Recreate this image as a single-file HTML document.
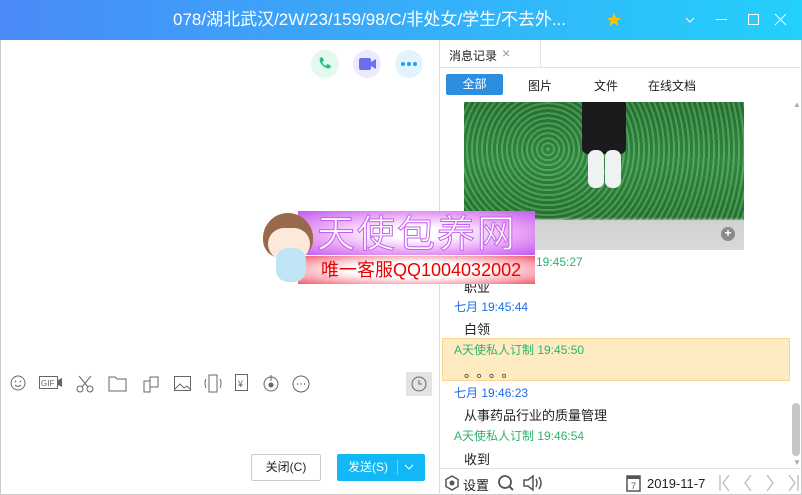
<!DOCTYPE html>
<html><head><meta charset="utf-8"><style>
*{margin:0;padding:0;box-sizing:border-box}
body{width:802px;height:495px;overflow:hidden;font-family:"Liberation Sans","Noto Sans CJK SC",sans-serif;font-size:12px;color:#222;background:#fff;position:relative}
.a{position:absolute}
.title{left:0;top:0;width:802px;height:40px;background:linear-gradient(90deg,#4a8af7,#23d0fb);color:#fff;font-size:17px;line-height:40px}
.ic{width:28px;height:28px;border-radius:14px}
.ts{color:#2eb36b;font-size:12px}
.tb{color:#1a6ee8;font-size:12px}
.msg{font-size:13px;color:#222}
.tool svg{position:absolute}
</style></head><body>
<div class="a title"><span class="a" style="left:173px;top:0">078/湖北武汉/2W/23/159/98/C/非处女/学生/不去外...</span>
<svg class="a" style="left:606px;top:12px" width="16" height="16"><path d="M8 1l2 5h5l-4 3 1.5 5L8 11l-4.5 3L5 9 1 6h5z" fill="#ffc400"/></svg>
<svg class="a" style="left:684px;top:14px" width="12" height="12"><path d="M2 4l4 4 4-4" stroke="#fff" fill="none"/></svg>
<div class="a" style="left:716px;top:19px;width:11px;height:1px;background:#fff"></div>
<div class="a" style="left:748px;top:14px;width:11px;height:11px;border:1px solid #fff"></div>
<svg class="a" style="left:774px;top:13px" width="13" height="13"><path d="M1 1L12 12M12 1L1 12" stroke="#fff"/></svg>
</div>
<div class="a" style="left:0;top:40px;width:1px;height:455px;background:#ccc"></div>
<div class="a" style="left:801px;top:40px;width:1px;height:455px;background:#ccc"></div>
<div class="a" style="left:0;top:494px;width:802px;height:1px;background:#ccc"></div>
<div class="a ic" style="left:311px;top:50px;background:#e3f8ef"></div>
<svg class="a" style="left:317px;top:56px" width="16" height="16"><path d="M3 2c1-1 2-1 3 0l1 3-2 1c1 2 2 3 4 4l1-2 3 1c1 1 1 2 0 3-3 2-12-4-10-10z" fill="#22c37c"/></svg>
<div class="a ic" style="left:353px;top:50px;background:#eceafe"></div>
<svg class="a" style="left:358px;top:57px" width="20" height="14"><rect x="1" y="1" width="12" height="12" rx="2" fill="#6d6cf0"/><path d="M13 5l5-3v10l-5-3z" fill="#6d6cf0"/></svg>
<div class="a ic" style="left:395px;top:50px;background:#e3f4fd"></div>
<svg class="a" style="left:400px;top:61px" width="18" height="6"><circle cx="3" cy="3" r="2" fill="#1da6ef"/><circle cx="9" cy="3" r="2" fill="#1da6ef"/><circle cx="15" cy="3" r="2" fill="#1da6ef"/></svg>
<div class="a" style="left:439px;top:40px;width:1px;height:455px;background:#ddd"></div>
<div class="a" style="left:440px;top:67px;width:361px;height:1px;background:#e4e4e4"></div>
<div class="a" style="left:440px;top:40px;width:101px;height:27px;border-right:1px solid #e4e4e4"></div>
<div class="a" style="left:449px;top:47px;font-size:12px">消息记录</div>
<div class="a" style="left:502px;top:45px;color:#999;font-size:14px">×</div>
<div class="a" style="left:446px;top:74px;width:57px;height:21px;background:#2b8ee1;border-radius:2px;color:#fff;text-align:center;line-height:21px">全部</div>
<div class="a" style="left:528px;top:77px">图片</div>
<div class="a" style="left:594px;top:77px">文件</div>
<div class="a" style="left:648px;top:77px">在线文档</div>
<div class="a" style="left:464px;top:102px;width:280px;height:148px;background:linear-gradient(180deg,#2e7a3c 0%,#3e9a4f 40%,#2f7d3a 78%,#cfd2d0 80%,#d8dad8 100%)"></div>
<div class="a" style="left:464px;top:102px;width:280px;height:118px;background:repeating-radial-gradient(circle at 30% 40%,rgba(120,200,120,.35) 0 2px,rgba(20,80,30,.3) 2px 5px)"></div>
<div class="a" style="left:582px;top:102px;width:44px;height:52px;background:#1b1b1d;border-radius:0 0 6px 6px"></div>
<div class="a" style="left:588px;top:150px;width:16px;height:38px;background:#eef2f2;border-radius:7px"></div>
<div class="a" style="left:605px;top:150px;width:16px;height:38px;background:#eef2f2;border-radius:7px"></div>
<div class="a" style="left:721px;top:227px;width:14px;height:14px;border-radius:7px;background:#8a8a8a;color:#fff;font-size:12px;line-height:13px;text-align:center;font-weight:bold">+</div>
<div class="a" style="left:536px;top:255px"><span class="ts">19:45:27</span></div>
<div class="a msg" style="left:464px;top:277px">职业</div>
<div class="a tb" style="left:454px;top:298px">七月 19:45:44</div>
<div class="a msg" style="left:464px;top:319px">白领</div>
<div class="a" style="left:442px;top:338px;width:348px;height:43px;background:#feebc1;border:1px solid #f7d98c"></div>
<div class="a ts" style="left:454px;top:341px">A天使私人订制 19:45:50</div>
<div class="a msg" style="left:464px;top:362px;letter-spacing:6px">。。。。</div>
<div class="a tb" style="left:454px;top:384px">七月 19:46:23</div>
<div class="a msg" style="left:464px;top:405px">从事药品行业的质量管理</div>
<div class="a ts" style="left:454px;top:427px">A天使私人订制 19:46:54</div>
<div class="a msg" style="left:464px;top:449px">收到</div>
<div class="a" style="left:793px;top:100px;color:#aaa;font-size:8px">▲</div>
<div class="a" style="left:792px;top:403px;width:8px;height:53px;background:#c5c5c5;border-radius:4px"></div>
<div class="a" style="left:793px;top:458px;color:#aaa;font-size:8px">▼</div>
<div class="a" style="left:440px;top:468px;width:361px;height:1px;background:#e4e4e4"></div>
<svg class="a" style="left:444px;top:475px" width="16" height="16"><path d="M8 1l6 3.5v7L8 15l-6-3.5v-7z" fill="none" stroke="#555" stroke-width="1.5"/><circle cx="8" cy="8" r="2.5" fill="#555"/></svg>
<div class="a" style="left:463px;top:475px;font-size:13px">设置</div>
<svg class="a" style="left:497px;top:474px" width="18" height="18"><circle cx="8" cy="8" r="6" fill="none" stroke="#555" stroke-width="1.8"/><path d="M12 12l4 4" stroke="#555" stroke-width="2"/></svg>
<svg class="a" style="left:522px;top:474px" width="24" height="18"><path d="M2 6h4l5-4v14l-5-4H2z" fill="none" stroke="#555" stroke-width="1.5"/><path d="M14 5q2 4 0 8M17 3q4 6 0 12" fill="none" stroke="#555" stroke-width="1.5"/></svg>
<svg class="a" style="left:626px;top:474px" width="16" height="18"><rect x="1" y="2" width="13" height="15" fill="none" stroke="#555" stroke-width="1.5"/><rect x="1" y="2" width="13" height="3" fill="#555"/><text x="5" y="15" font-size="9" fill="#555" font-family="Liberation Sans">7</text></svg>
<div class="a" style="left:647px;top:476px;font-size:13px">2019-11-7</div>
<svg class="a" style="left:716px;top:473px" width="86" height="20"><g stroke="#bbb" stroke-width="1.3" fill="none"><path d="M4 2v16M13 2L7 10l6 8"/><path d="M35 2l-6 8 6 8"/><path d="M51 2l6 8-6 8"/><path d="M73 2l6 8-6 8M82 2v16"/></g></svg>
<div class="a tool" style="left:0;top:370px;width:440px;height:28px;color:#666">
<svg style="left:10px;top:5px" width="16" height="16"><circle cx="8" cy="8" r="7" fill="none" stroke="#666"/><circle cx="5.5" cy="6.5" r=".8" fill="#666"/><circle cx="10.5" cy="6.5" r=".8" fill="#666"/><path d="M5 10q3 3 6 0" fill="none" stroke="#666"/></svg>
<svg style="left:39px;top:6px" width="24" height="14"><rect x=".5" y=".5" width="18" height="12" fill="none" stroke="#666"/><text x="2" y="10" font-size="8" fill="#666" font-family="Liberation Sans">GIF</text><path d="M19 4l4-2v9l-4-2z" fill="#666"/></svg>
<svg style="left:76px;top:5px" width="18" height="18"><circle cx="4" cy="14" r="3" fill="none" stroke="#666"/><circle cx="14" cy="14" r="3" fill="none" stroke="#666"/><path d="M6 12L15 1M12 12L3 1" stroke="#666"/></svg>
<svg style="left:108px;top:6px" width="20" height="16"><path d="M1 1h6l2 2h9v12H1z" fill="none" stroke="#666"/></svg>
<svg style="left:142px;top:5px" width="18" height="18"><path d="M2 6h6v11H2zM8 2h8v10H8z" fill="none" stroke="#666"/></svg>
<svg style="left:174px;top:6px" width="18" height="16"><rect x=".5" y=".5" width="16" height="14" fill="none" stroke="#666"/><path d="M1 13l5-5 4 4 3-2 4 4" fill="none" stroke="#666"/></svg>
<svg style="left:204px;top:4px" width="18" height="20"><rect x="5" y="1" width="8" height="17" fill="none" stroke="#666"/><path d="M2 5q-2 4 0 9M16 5q2 4 0 9" fill="none" stroke="#666"/></svg>
<svg style="left:235px;top:4px" width="14" height="18"><rect x=".5" y=".5" width="12" height="16" fill="none" stroke="#666"/><text x="3" y="13" font-size="9" fill="#666">¥</text></svg>
<svg style="left:262px;top:4px" width="18" height="18"><circle cx="9" cy="10" r="7" fill="none" stroke="#666"/><circle cx="9" cy="11" r="2.5" fill="#666"/><path d="M9 1v6" stroke="#666"/></svg>
<svg style="left:292px;top:5px" width="18" height="18"><circle cx="9" cy="9" r="8" fill="none" stroke="#666"/><path d="M5 9h1M8.5 9h1M12 9h1" stroke="#666" stroke-width="1.5"/></svg>
<div class="a" style="left:406px;top:2px;width:26px;height:24px;background:#e3e3e3"></div>
<svg style="left:411px;top:6px" width="16" height="16"><circle cx="8" cy="8" r="7" fill="none" stroke="#666"/><path d="M8 4v4h3" fill="none" stroke="#666"/></svg>
</div>
<div class="a" style="left:251px;top:454px;width:70px;height:27px;border:1px solid #ccc;border-radius:2px;text-align:center;line-height:25px;font-size:12px">关闭(C)</div>
<div class="a" style="left:337px;top:454px;width:88px;height:27px;background:#12b7f5;border-radius:2px;color:#fff;line-height:27px;font-size:12px"><span style="margin-left:11px">发送(S)</span><span class="a" style="left:60px;top:6px;width:1px;height:15px;background:#6fd3f9"></span><svg class="a" style="left:67px;top:9px" width="10" height="8"><path d="M1 2l4 4 4-4" stroke="#fff" fill="none"/></svg></div>
<div class="a" style="left:298px;top:211px;width:237px;height:44px;background:radial-gradient(ellipse at center,#fff 20%,#e9a5f5 60%,#c25af0 100%)"></div>
<div class="a" style="left:317px;top:206px;font-size:38px;color:#fff;-webkit-text-stroke:1px #c45ff0;letter-spacing:2px;font-family:'Noto Sans CJK SC',sans-serif;line-height:50px">天使包养网</div>
<div class="a" style="left:298px;top:256px;width:237px;height:28px;background:radial-gradient(ellipse at center,#fff 40%,#f9a5b0 75%,#ef5a6c 100%)"></div>
<div class="a" style="left:321px;top:257px;font-size:18px;color:#e00;line-height:26px">唯一客服QQ1004032002</div>
<div class="a" style="left:263px;top:213px;width:50px;height:45px;border-radius:25px 25px 18px 18px;background:#98694a"></div>
<div class="a" style="left:268px;top:228px;width:42px;height:32px;border-radius:20px;background:#fde8dc"></div>
<div class="a" style="left:276px;top:248px;width:30px;height:34px;border-radius:12px;background:#bfe4f3"></div>
</body></html>
